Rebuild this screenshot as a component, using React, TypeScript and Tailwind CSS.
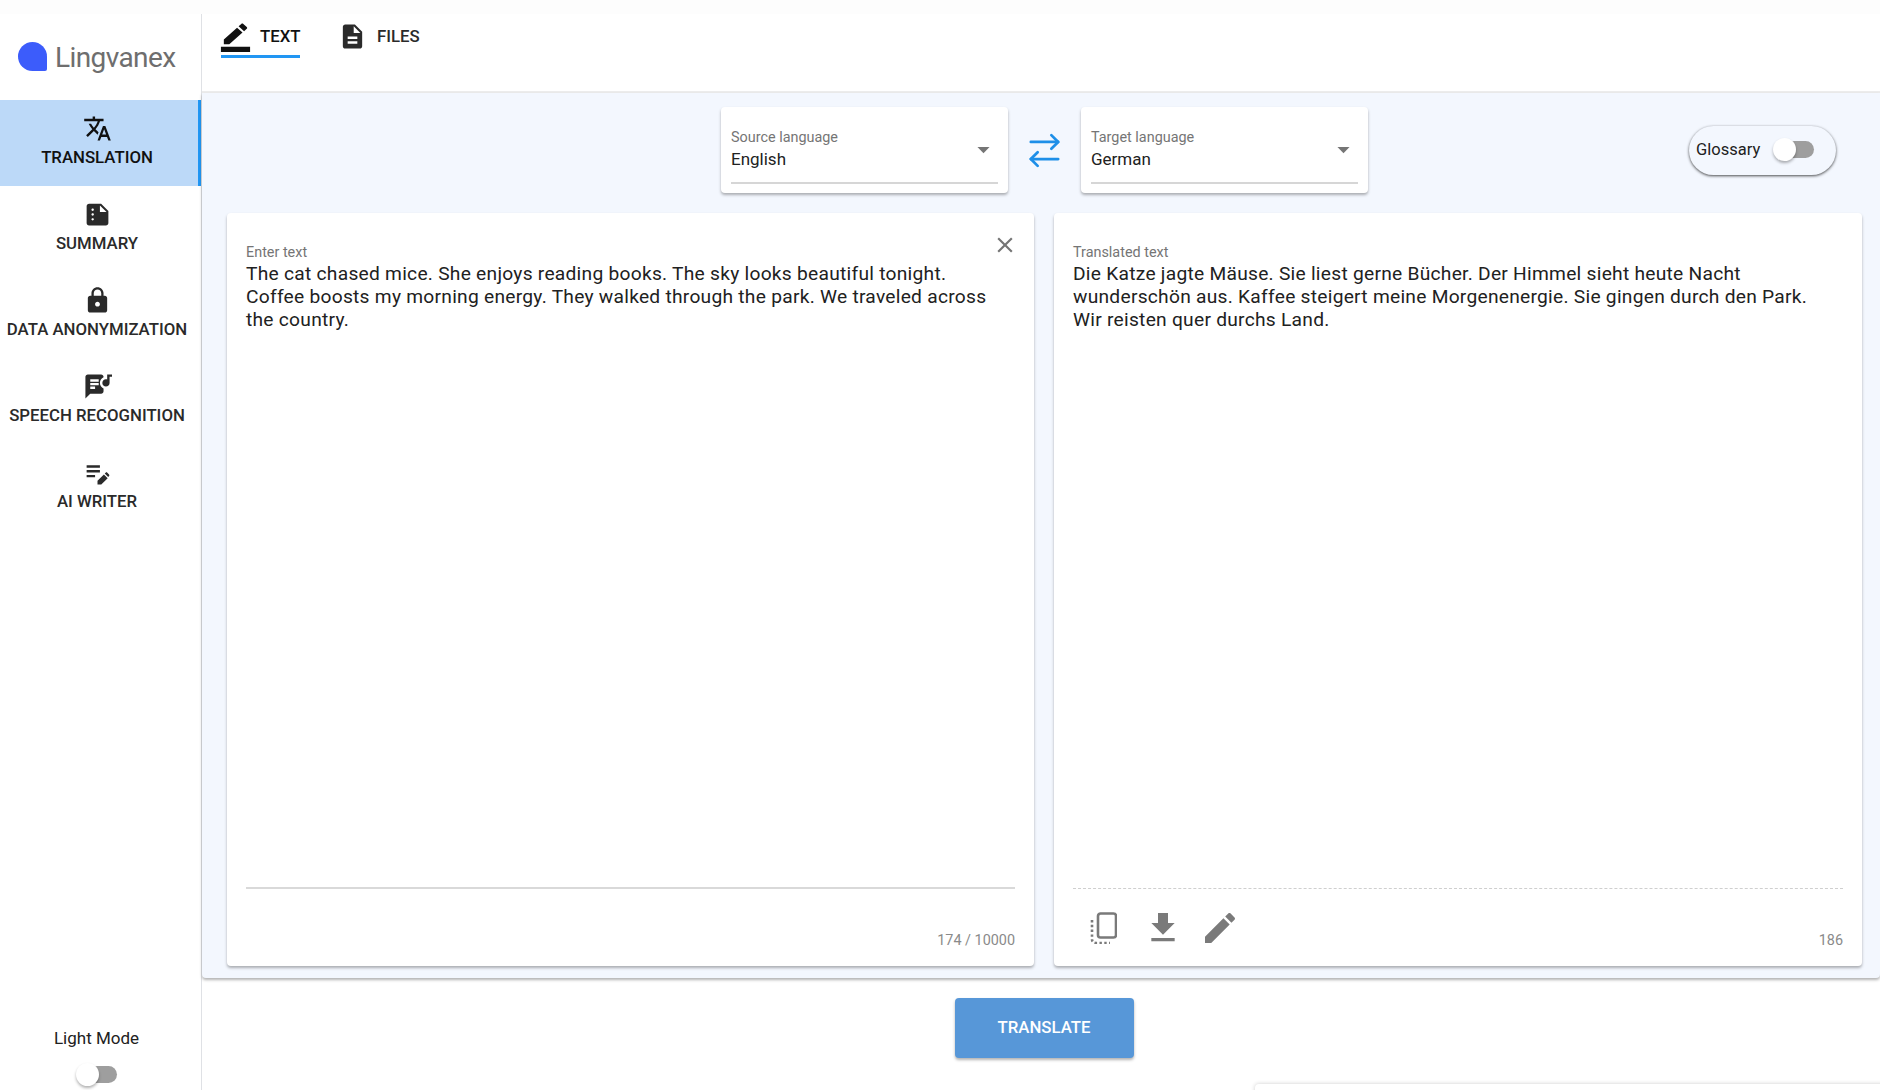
import { ArrowRightLeft } from "lucide-react";

const paths = {
  translate:
    "m12.87 15.07-2.54-2.51.03-.03c1.74-1.94 2.98-4.17 3.71-6.53H17V4h-7V2H8v2H1v1.99h11.17C11.5 7.92 10.44 9.75 9 11.35 8.07 10.32 7.3 9.19 6.69 8h-2c.73 1.63 1.73 3.17 2.98 4.56l-5.09 5.02L4 19l5-5 3.11 3.11zM18.5 10h-2L12 22h2l1.12-3h4.75L21 22h2zm-2.62 7 1.62-4.33L19.12 17z",
  summary:
    "M15 3H5c-1.1 0-1.99.9-1.99 2L3 19c0 1.1.89 2 1.99 2H19c1.1 0 2-.9 2-2V9l-6-6zM8 17c-.55 0-1-.45-1-1s.45-1 1-1 1 .45 1 1-.45 1-1 1zm0-4c-.55 0-1-.45-1-1s.45-1 1-1 1 .45 1 1-.45 1-1 1zm0-4c-.55 0-1-.45-1-1s.45-1 1-1 1 .45 1 1-.45 1-1 1zm6 1V4.5l5.5 5.5H14z",
  lock: "M18 8h-1V6c0-2.76-2.24-5-5-5S7 3.24 7 6v2H6c-1.1 0-2 .9-2 2v10c0 1.1.9 2 2 2h12c1.1 0 2-.9 2-2V10c0-1.1-.9-2-2-2zm-6 9c-1.1 0-2-.9-2-2s.9-2 2-2 2 .9 2 2-.9 2-2 2zm3.1-9H8.9V6c0-1.71 1.39-3.1 3.1-3.1 1.71 0 3.1 1.39 3.1 3.1v2z",
  lyrics:
    "M14 9c0-2.04 1.24-3.79 3-4.57V4c0-1.1-.9-2-2-2H4c-1.1 0-2 .9-2 2v18l4-4h9c1.1 0 2-.9 2-2v-2.42c-1.76-.78-3-2.53-3-4.58zm-4 5H6v-2h4v2zm3-3H6V9h7v2zm0-3H6V6h7v2zM20 6.18c-.31-.11-.65-.18-1-.18-1.66 0-3 1.34-3 3s1.34 3 3 3 3-1.34 3-3V4h2V2h-4v4.18z",
  editNote:
    "M3 10h11v2H3zm0-2h11V6H3zm0 8h7v-2H3zm15.01-3.13.71-.71c.39-.39 1.02-.39 1.41 0l1.41 1.41c.39.39.39 1.02 0 1.41l-.71.71zm-.71.71L12 18.88V22h3.12l5.3-5.3z",
  borderColor:
    "M22 24H2v-4h20v4zM13.06 5.19l3.75 3.75L7.75 18H4v-3.75l9.06-9.06zm4.82 2.68-3.75-3.75 1.83-1.83c.39-.39 1.02-.39 1.41 0l2.34 2.34c.39.39.39 1.02 0 1.41l-1.83 1.83z",
  description:
    "M14 2H6c-1.1 0-1.99.9-1.99 2L4 20c0 1.1.89 2 1.99 2H18c1.1 0 2-.9 2-2V8l-6-6zm2 16H8v-2h8v2zm0-4H8v-2h8v2zm-3-5V3.5L18.5 9H13z",
  close:
    "M19 6.41 17.59 5 12 10.59 6.41 5 5 6.41 10.59 12 5 17.59 6.41 19 12 13.41 17.59 19 19 17.59 13.41 12z",
  download: "M19 9h-4V3H9v6H5l7 7 7-7zM5 18v2h14v-2H5z",
  edit: "M3 17.25V21h3.75L17.81 9.94l-3.75-3.75L3 17.25zM20.71 7.04c.39-.39.39-1.02 0-1.41l-2.34-2.34c-.39-.39-1.02-.39-1.41 0l-1.83 1.83 3.75 3.75 1.83-1.83z",
  caret: "m7 10 5 5 5-5z",
};

const Icon = ({ d, className }: { d: string; className: string }) => (
  <svg viewBox="0 0 24 24" fill="currentColor" preserveAspectRatio="none" className={className}>
    <path d={d} />
  </svg>
);

const navItems = [
  { label: "TRANSLATION", icon: paths.translate, active: true },
  { label: "SUMMARY", icon: paths.summary },
  { label: "DATA ANONYMIZATION", icon: paths.lock },
  { label: "SPEECH RECOGNITION", icon: paths.lyrics },
  { label: "AI WRITER", icon: paths.editNote },
];

const Toggle = () => (
  <div className="relative h-[24px] w-[41px]">
    <div className="absolute left-[7px] top-[3px] h-[17px] w-[34px] rounded-full bg-[#9e9e9e]" />
    <div className="absolute left-0 top-0 h-[23px] w-[23px] rounded-full bg-white shadow-[0_2px_3px_rgba(0,0,0,0.3)]" />
  </div>
);

const LangSelect = ({ label, value }: { label: string; value: string }) => (
  <div className="flex h-[86px] w-[287px] flex-col rounded-[4px] bg-white px-[10px] shadow-[0_2px_3px_rgba(0,0,0,0.3)]">
    <div className="flex flex-1 items-center justify-between pt-[10px]">
      <div>
        <div className="text-[14.4px] leading-[17px] text-[#757575]">{label}</div>
        <div className="mt-[1px] text-[17px] leading-[24px] text-[#212121]">{value}</div>
      </div>
      <Icon d={paths.caret} className="h-[29px] w-[29px] text-[#757575]" />
    </div>
    <div className="mb-[9px] h-[2px] bg-[#d6d6d6]" />
  </div>
);

const TextCard = ({
  label,
  children,
  footer,
  rule,
  close,
}: {
  label: string;
  children: string;
  footer: React.ReactNode;
  rule: string;
  close?: boolean;
}) => (
  <div className="relative flex flex-col rounded-[4px] bg-white px-[19px] shadow-[0_2px_3px_rgba(0,0,0,0.3)]">
    {close && (
      <Icon d={paths.close} className="absolute right-[16px] top-[19px] h-[26px] w-[26px] text-[#757575]" />
    )}
    <div className="flex-1 pt-[31px]">
      <div className="text-[14.4px] leading-[17px] text-[#757575]">{label}</div>
      <p className="mt-[1px] max-w-[752px] text-[19.2px] leading-[23px] tracking-[0.26px] text-[#212121]">{children}</p>
    </div>
    <div className={rule} />
    <div className="h-[77px]">{footer}</div>
  </div>
);

const App = () => {
  return (
    <div className="relative flex h-[1090px] w-[1880px] flex-col overflow-hidden bg-white font-['Roboto',sans-serif]">
      <div className="h-[14px] bg-[#fdfdfd]" />
      <div className="flex min-h-0 flex-1">
        {/* Sidebar */}
        <aside className="flex w-[202px] flex-col border-r-[1.5px] border-[#dfe1e5]">
          <div className="flex h-[86px] items-center pb-[2px] pl-[18px]">
            <div className="h-[29px] w-[29px] rounded-[50%] rounded-br-[2px] bg-[#3c5cfb]" />
            <span className="ml-[8px] mt-[3px] text-[28px] tracking-[-0.6px] text-[#6e6e6e]">Lingvanex</span>
          </div>
          {navItems.map((item) => (
            <div
              key={item.label}
              className={
                item.active
                  ? "flex h-[86px] flex-col items-center justify-center border-r-[3px] border-[#2196f3] bg-[#bcd9f8] pb-[4px] pr-[4px] text-[#111111]"
                  : "flex h-[86px] flex-col items-center justify-center pb-[4px] pr-[7px] text-[#2a2a2a]"
              }
            >
              <Icon d={item.icon} className="h-[29px] w-[29px]" />
              <span className="mt-[3px] text-[16.8px] font-medium leading-[22px]">{item.label}</span>
            </div>
          ))}
          <div className="mt-auto flex flex-col items-center pb-[3px] pr-[8px]">
            <span className="text-[17px] leading-[22px] text-[#212121]">Light Mode</span>
            <div className="mt-[14px]">
              <Toggle />
            </div>
          </div>
        </aside>

        {/* Main */}
        <main className="flex min-w-0 flex-1 flex-col">
          <div className="flex h-[79px] items-start border-b-2 border-[#ececec] pl-[19px] pt-[3px]">
            <div className="flex h-[41px] w-[79px] items-center border-b-[3px] border-[#2196f3] text-[#111111]">
              <Icon d={paths.borderColor} className="-ml-[3px] h-[31px] w-[35px] shrink-0" />
              <span className="ml-[7px] mt-[1px] text-[16.8px] font-medium">TEXT</span>
            </div>
            <div className="ml-[38px] flex h-[39px] items-center gap-[10px] text-[#2a2a2a]">
              <Icon d={paths.description} className="h-[29px] w-[29px]" />
              <span className="text-[16.8px] font-medium">FILES</span>
            </div>
          </div>

          <div className="flex h-[885px] flex-col rounded-b-[4px] bg-[#f3f7fe] pb-[12px] pl-[25px] pr-[18px] pt-[14px] shadow-[0_2px_3px_rgba(0,0,0,0.3)]">
            <div className="grid grid-cols-[1fr_auto_1fr] items-center">
              <div />
              <div className="flex items-center">
                <LangSelect label="Source language" value="English" />
                <div className="flex w-[73px] justify-center">
                  <ArrowRightLeft className="h-[41px] w-[41px] text-[#1e8fe8]" strokeWidth={1.6} />
                </div>
                <LangSelect label="Target language" value="German" />
              </div>
              <div className="flex justify-end pr-[26px]">
                <div className="flex h-[49px] w-[147px] items-center rounded-full bg-[#f3f7fe] pl-[7px] shadow-[0_1px_3px_rgba(0,0,0,0.7)]">
                  <span className="text-[16.5px] text-[#212121]">Glossary</span>
                  <div className="ml-[13px]">
                    <Toggle />
                  </div>
                </div>
              </div>
            </div>

            <div className="mt-[20px] grid min-h-0 flex-1 grid-cols-[807px_808px] gap-[20px]">
              <TextCard
                close
                label="Enter text"
                rule="h-[2px] bg-[#d9d9d9]"
                footer={
                  <div className="pt-[43px] text-right text-[14.4px] leading-[17px] text-[#8a8a8a]">174 / 10000</div>
                }
              >
                The cat chased mice. She enjoys reading books. The sky looks beautiful tonight. Coffee boosts my morning energy. They walked through the park. We traveled across the country.
              </TextCard>
              <TextCard
                label="Translated text"
                rule="h-0 border-t-[1.5px] border-dashed border-[#cfcfcf]"
                footer={
                  <div className="flex items-start justify-between">
                    <div className="flex items-center pl-[17px] pt-[19px] text-[#7a7a7a]">
                      <svg viewBox="0 0 27 32" className="h-[32px] w-[27px]" fill="none" stroke="currentColor">
                        <rect x="8" y="1.5" width="18" height="24" rx="2.5" strokeWidth="2.6" />
                        <path d="M2 8 V27 Q2 31 6 31 H20" strokeWidth="2.6" strokeDasharray="2.4 2.4" />
                      </svg>
                      <Icon d={paths.download} className="ml-[26px] h-[40px] w-[40px]" />
                      <Icon d={paths.edit} className="ml-[17px] h-[40px] w-[40px]" />
                    </div>
                    <div className="pt-[43px] text-[14.4px] leading-[17px] text-[#8a8a8a]">186</div>
                  </div>
                }
              >
                Die Katze jagte Mäuse. Sie liest gerne Bücher. Der Himmel sieht heute Nacht wunderschön aus. Kaffee steigert meine Morgenenergie. Sie gingen durch den Park. Wir reisten quer durchs Land.
              </TextCard>
            </div>
          </div>

          <div className="flex justify-center pl-[6px] pt-[20px]">
            <button className="h-[60px] w-[179px] rounded-[4px] bg-[#5797d8] text-[16.8px] font-medium text-white shadow-[0_2px_3px_rgba(0,0,0,0.3)]">
              TRANSLATE
            </button>
          </div>
        </main>
      </div>
      <div className="absolute left-[1255px] top-[1084px] h-[20px] w-[640px] rounded-[4px] bg-white shadow-[0_0_4px_rgba(0,0,0,0.2)]" />
    </div>
  );
};

export default App;
